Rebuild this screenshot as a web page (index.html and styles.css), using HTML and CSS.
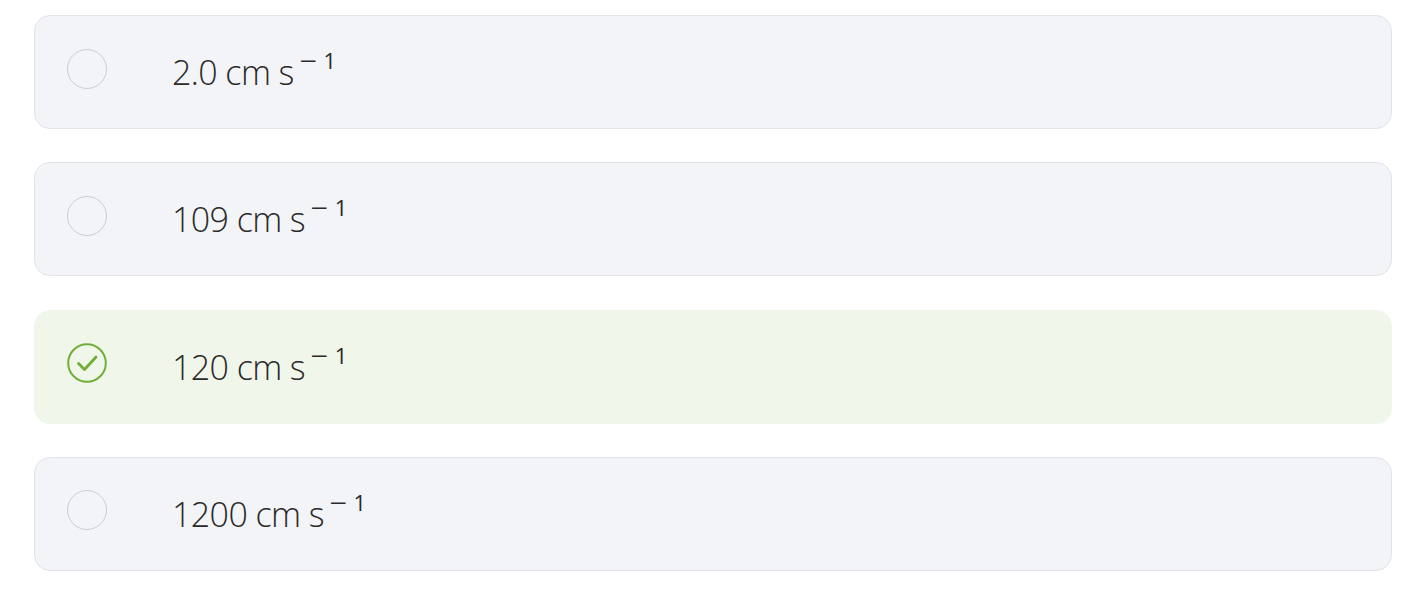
FILE: index.html
```html
<!DOCTYPE html>
<html lang="en">
<head>
<meta charset="utf-8">
<title>Options</title>
<link rel="stylesheet" href="styles.css">
</head>
<body>
<div class="options">
  <div class="option">
    <span class="radio"></span>
    <span class="label">2.0 cm s<sup><span class="minus">−</span>1</sup></span>
  </div>
  <div class="option">
    <span class="radio"></span>
    <span class="label">109 cm s<sup><span class="minus">−</span>1</sup></span>
  </div>
  <div class="option option--correct">
    <span class="radio radio--checked">
      <svg viewBox="0 0 40 40" width="40" height="40">
        <circle cx="20" cy="20" r="18.8" fill="none" stroke="#6fae38" stroke-width="2"/>
        <path d="M11.5 20.5 L17.5 26.5 L29 14" fill="none" stroke="#6fae38" stroke-width="2.8" stroke-linecap="round" stroke-linejoin="round"/>
      </svg>
    </span>
    <span class="label">120 cm s<sup><span class="minus">−</span>1</sup></span>
  </div>
  <div class="option">
    <span class="radio"></span>
    <span class="label">1200 cm s<sup><span class="minus">−</span>1</sup></span>
  </div>
</div>
</body>
</html>
```

FILE: styles.css
```css
html, body {
  margin: 0;
  padding: 0;
  background: #ffffff;
}

body {
  font-family: "Open Sans", "Noto Sans", sans-serif;
  color: #2a2a2a;
}

.options {
  display: flex;
  flex-direction: column;
  gap: 33.3px;
  padding: 15px 24px 0 34px;
}

.option {
  display: flex;
  align-items: center;
  height: 114px;
  box-sizing: border-box;
  background: #f3f4f8;
  border: 1px solid #e2e4ea;
  border-radius: 16px;
  padding-left: 32px;
}

.option--correct {
  background: #f0f6e9;
  border-color: #f0f6e9;
}

.radio {
  flex: none;
  width: 40px;
  height: 40px;
  box-sizing: border-box;
  border: 1.5px solid #cdcdcf;
  border-radius: 50%;
  margin-top: -7px;
}

.radio--checked {
  border: none;
}

.radio svg {
  display: block;
}

.label {
  margin-left: 65px;
  font-size: 34px;
  font-weight: 350;
  line-height: 40px;
  letter-spacing: -0.6px;
  white-space: nowrap;
}

.label sup {
  font-size: 22px;
  font-weight: 400;
  line-height: 0;
  vertical-align: 0;
  position: relative;
  top: -16px;
  margin-left: 8px;
  letter-spacing: 0;
}

.minus {
  display: inline-block;
  transform: scaleX(1.4);
  margin-right: 9px;
}
```
